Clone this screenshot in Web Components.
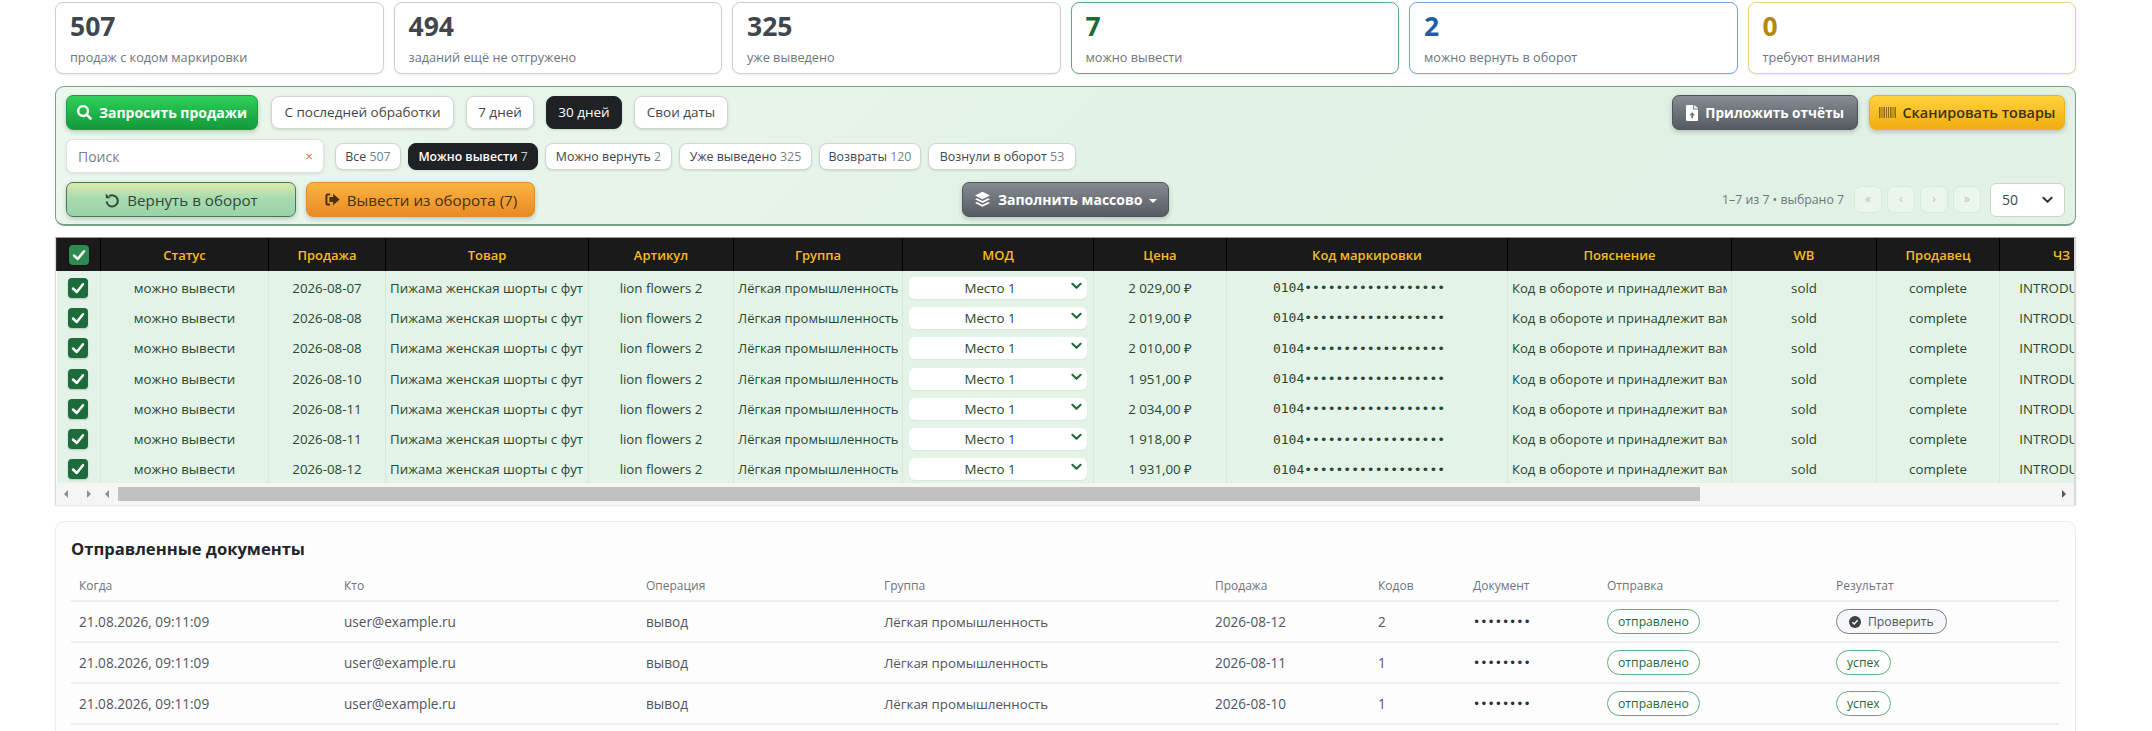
<!DOCTYPE html>
<html lang="ru">
<head>
<meta charset="utf-8">
<title>Вывод из оборота</title>
<style>
  html, body { margin: 0; height: 731px; overflow: hidden; background: #fff; }
  body { font: 13px "Open Sans", "Noto Sans", sans-serif; color: #2b3036; }
  #page { display: flex; flex-direction: column; width: 2021px; margin-left: 55px; padding-top: 2px; }
  #kpis { display: grid; grid-template-columns: repeat(6, 1fr); gap: 10px; margin-bottom: 12px; }
  action-toolbar { margin-bottom: 11px; }
  sales-table { margin-bottom: 16px; }
</style>
</head>
<body>
<div id="page">
  <div id="kpis">
    <kpi-card value="507" label="продаж с кодом маркировки"></kpi-card>
    <kpi-card value="494" label="заданий ещё не отгружено"></kpi-card>
    <kpi-card value="325" label="уже выведено"></kpi-card>
    <kpi-card value="7" label="можно вывести" tone="green"></kpi-card>
    <kpi-card value="2" label="можно вернуть в оборот" tone="blue"></kpi-card>
    <kpi-card value="0" label="требуют внимания" tone="amber"></kpi-card>
  </div>
  <action-toolbar></action-toolbar>
  <sales-table></sales-table>
  <docs-panel></docs-panel>
</div>

<script>
// Small inline icons, kept in one place so the buttons stay readable
const ICONS = {
  search: `<svg viewBox="0 0 512 512" fill="currentColor"><path d="M505 442.7L405.3 343c-4.5-4.5-10.6-7-17-7H372c27.6-35.3 44-79.7 44-128C416 93.1 322.9 0 208 0S0 93.1 0 208s93.1 208 208 208c48.3 0 92.7-16.4 128-44v16.3c0 6.4 2.5 12.5 7 17l99.7 99.7c9.4 9.4 24.6 9.4 33.9 0l28.3-28.3c9.4-9.4 9.4-24.6.1-34zM208 336c-70.7 0-128-57.2-128-128 0-70.7 57.2-128 128-128 70.7 0 128 57.2 128 128 0 70.7-57.2 128-128 128z"/></svg>`,
  undo: `<svg viewBox="0 0 16 16" fill="none" stroke="currentColor" stroke-width="2"><path d="M5.2 4.2A5.6 5.6 0 1 1 2.6 9.5"/><path d="M1.8 1.6v4.6h4.6z" fill="currentColor" stroke="none"/></svg>`,
  exit: `<svg viewBox="0 0 16 13" fill="currentColor"><path d="M6 1.500H3.600A1.200 1.200 0 0 0 2.400 2.700v7.600a1.200 1.200 0 0 0 1.200 1.200H6" fill="none" stroke="currentColor" stroke-width="2"/><path d="M9.200 .7 15.600 6.500l-6.400 5.800V9H5.400V4h3.800z"/></svg>`,
  layers: `<svg viewBox="0 0 16 16" fill="currentColor"><path d="M8 .8 15 4.300 8 7.800 1 4.300z"/><path d="M2.700 6.900 8 9.500l5.300-2.600L15 7.800 8 11.300 1 7.800z"/><path d="M2.700 10.400 8 13l5.300-2.600 1.700.9-7 3.500-7-3.500z"/></svg>`,
  file: `<svg viewBox="0 0 14 18" fill="currentColor"><path fill-rule="evenodd" d="M1.500 0H8v5h6v11.500a1.500 1.500 0 0 1-1.500 1.500h-11A1.500 1.500 0 0 1 0 16.500v-15A1.500 1.500 0 0 1 1.500 0zM7 8.200 3.900 11.600H6V15h2v-3.400h2.100z"/><path d="M9.200 0 14 3.800H9.200z"/></svg>`,
  barcode: `<svg viewBox="0 0 17 11" fill="#8a6a12"><path d="M0 0h1.500v11H0zM2.500 0h1v11h-1zM4.500 0h1.500v11H4.500zM7 0h1v11H7zM9 0h1v11H9zM11 0h1.500v11H11zM13.500 0h1v11h-1zM15.500 0H17v11h-1.500z"/></svg>`,
  tick: `<svg viewBox="0 0 16 16" fill="none" stroke="currentColor" stroke-width="2" stroke-linecap="round" stroke-linejoin="round"><path d="M4 8.400 7 11.200 12 5"/></svg>`,
  chevron: `<svg viewBox="0 0 12 8" fill="none" stroke="currentColor" stroke-width="2.200" stroke-linecap="round" stroke-linejoin="round"><path d="M1.500 1.500 6 6l4.500-4.500"/></svg>`,
  verified: `<svg viewBox="0 0 16 16"><circle cx="8" cy="8" r="8" fill="currentColor"/><path d="M4.500 8.300 7 10.700 11.500 5.700" fill="none" stroke="#fff" stroke-width="2"/></svg>`,
};

// Base class: attach an open shadow root and write the markup once
class ShadowElement extends HTMLElement {
  constructor() {
    super();
    this.attachShadow({ mode: "open" });
  }

  connectedCallback() {
    this.shadowRoot.innerHTML = this.render();
  }
}

class KpiCard extends ShadowElement {
  render() {
    const tone = {
      green: ["#5fae78", "#1c6b34"],
      blue: ["#76a5dc", "#1f5ca8"],
      amber: ["#f2d27a", "#b8860b"],
    }[this.getAttribute("tone")] || ["#ccced3", "#41464d"];
    return `
      <style>
        :host { display: block; box-sizing: border-box; height: 72px; padding: 5px 14px 0; background: #fff;
          border: 1px solid ${tone[0]}; border-radius: 8px; box-shadow: 0 1px 2px rgba(0,0,0,.08); }
        b { display: block; font-size: 26.500px; line-height: 36px; font-weight: 700; color: ${tone[1]}; }
        span { display: block; margin-top: 5px; font-size: 12.700px; line-height: 17px; color: #6c757d; }
      </style>
      <b>${this.getAttribute("value")}</b><span>${this.getAttribute("label")}</span>`;
  }
}

// Raised gradient button used across the toolbar
class ToolButton extends ShadowElement {
  render() {
    const v = {
      green: "color:#fff;font-weight:700;background:linear-gradient(#2fd058,#129a3a);border-color:#18a03f",
      dark: "color:#fff;font-weight:700;background:linear-gradient(#868c92,#565b62);border-color:#50555b",
      yellow: "color:#3c3312;background:linear-gradient(#ffd23c,#f0ac10);border-color:#e7b21f;font-weight:600",
      mint: "color:#34463a;background:linear-gradient(#dfe8a8,#a8dcb0 45%,#9bd2a8);border-color:#3f7d56",
      orange: "color:#46300f;background:linear-gradient(#fbb440,#e98a26);border-color:#e08f2c",
    }[this.getAttribute("variant")];
    const icon = this.getAttribute("icon");
    const fs = this.getAttribute("fs") || 14;
    const ih = this.getAttribute("ih") || 15;
    return `
      <style>
        :host { display: block; width: ${this.getAttribute("w")}px; height: 35px; }
        button { all: unset; box-sizing: border-box; display: flex; align-items: center; justify-content: center; gap: 7px;
          width: 100%; height: 100%; border: 1px solid; border-radius: 7px; font: inherit; font-size: ${fs}px; ${v};
          box-shadow: 0 2px 5px rgba(0,0,0,.2); white-space: nowrap; }
        svg { display: block; height: ${ih}px; width: auto; }
      </style>
      <button>${ICONS[icon] || ""}<span><slot></slot></span></button>`;
  }
}

// Period switch pill
class SegPill extends ShadowElement {
  render() {
    const on = this.hasAttribute("active");
    return `
      <style>
        :host { display: block; box-sizing: border-box; width: ${this.getAttribute("w")}px; height: 33px; line-height: 31px; text-align: center;
          font-size: 13.500px; border: 1px solid ${on ? "#1f2225" : "#cfd6d1"}; border-radius: 8px; white-space: nowrap;
          background: ${on ? "#1f2225" : "#fff"}; color: ${on ? "#fff" : "#3f454b"}; box-shadow: 0 1px 3px rgba(0,0,0,.12); }
      </style>
      <slot></slot>`;
  }
}

class FilterChip extends ShadowElement {
  render() {
    const on = this.hasAttribute("active");
    return `
      <style>
        :host { display: block; box-sizing: border-box; width: ${this.getAttribute("w")}px; height: 27px; line-height: 25px; text-align: center;
          font-size: ${on ? 12.200 : 12.400}px; border: 1px solid ${on ? "#1f2225" : "#cfd6d1"}; border-radius: 8px; white-space: nowrap;
          background: ${on ? "#1f2225" : "#fff"}; color: ${on ? "#fff" : "#3f454b"}; font-weight: ${on ? 600 : 400};
          box-shadow: 0 1px 2px rgba(0,0,0,.1); }
        i { font-style: normal; font-weight: 400; color: ${on ? "#c8ccd0" : "#7a8087"}; }
      </style>
      <slot></slot> <i>${this.getAttribute("count")}</i>`;
  }
}

class SearchBox extends ShadowElement {
  render() {
    return `
      <style>
        :host { display: block; position: relative; width: 258px; height: 34px; }
        input { box-sizing: border-box; width: 100%; height: 100%; padding: 0 26px 0 11px; font: inherit; font-size: 14px;
          border: 1px solid #dfe3e0; border-radius: 7px; background: #fff; outline: none; box-shadow: 0 1px 3px rgba(0,0,0,.1); }
        input::placeholder { color: #7b8087; opacity: 1; }
        span { position: absolute; right: 11px; top: 8px; font-size: 13px; line-height: 18px; color: #e2606a; }
      </style>
      <input placeholder="Поиск"><span>×</span>`;
  }
}

class PagerButton extends ShadowElement {
  render() {
    return `
      <style>
        :host { display: block; box-sizing: border-box; width: 28px; height: 27px; line-height: 24px; text-align: center;
          font-size: 12px; color: #b4c4b8; background: rgba(255,255,255,.3); border: 1px solid #d9e9dc; border-radius: 7px; }
      </style>
      <slot></slot>`;
  }
}

class PageSize extends ShadowElement {
  render() {
    return `
      <style>
        :host { display: block; position: relative; box-sizing: border-box; width: 75px; height: 34px; padding-left: 11px; line-height: 32px;
          font-size: 14px; color: #3f454b; background: #fff; border: 1px solid #ccd2ce; border-radius: 6px; }
        svg { position: absolute; right: 11px; top: 12px; width: 11px; height: 8px; color: #33383d; }
      </style>
      <slot></slot>${ICONS.chevron}`;
  }
}

// Three-row green panel with request, filter and bulk actions
class ActionToolbar extends ShadowElement {
  render() {
    return `
      <style>
        :host { display: grid; gap: 9px; align-content: start; box-sizing: border-box; height: 140px; padding: 8px 10px 0; border-radius: 9px;
          border: 1px solid #78a287; border-bottom-width: 2px; background: linear-gradient(135deg, #ecf7ee, #e0f1e4 70%, #e2f2e6); }
        .row { display: flex; align-items: center; }
        .g12 { gap: 12px; } .g7 { gap: 7px; } .g11 { gap: 11px; } .g10 { gap: 10px; }
        .push { margin-left: auto; }
        .tri { display: grid; grid-template-columns: 1fr auto 1fr; align-items: center; }
        .info { font-size: 12.300px; color: #6c757d; margin-right: 5px; white-space: nowrap; }
        .pages { display: flex; align-items: center; justify-content: flex-end; gap: 5px; }
        search-box { margin-right: 4px; }
        .mr1 { margin-right: 1px; }
      </style>
      <div class="row g12">
        <tool-button variant="green" icon="search" w="192" class="mr1">Запросить продажи</tool-button>
        <seg-pill w="183">С последней обработки</seg-pill>
        <seg-pill w="68">7 дней</seg-pill>
        <seg-pill w="76" active>30 дней</seg-pill>
        <seg-pill w="94">Свои даты</seg-pill>
        <div class="row g11 push">
          <tool-button variant="dark" icon="file" ih="16" fs="13.600" w="186">Приложить отчёты</tool-button>
          <tool-button variant="yellow" icon="barcode" ih="11" fs="14.400" w="196">Сканировать товары</tool-button>
        </div>
      </div>
      <div class="row g7">
        <search-box></search-box>
        <filter-chip w="66" count="507">Все</filter-chip>
        <filter-chip w="130" count="7" active>Можно вывести</filter-chip>
        <filter-chip w="127" count="2">Можно вернуть</filter-chip>
        <filter-chip w="133" count="325">Уже выведено</filter-chip>
        <filter-chip w="102" count="120">Возвраты</filter-chip>
        <filter-chip w="148" count="53">Вознули в оборот</filter-chip>
      </div>
      <div class="tri">
        <div class="row g10">
          <tool-button variant="mint" icon="undo" fs="15.200" ih="16" w="230">Вернуть в оборот</tool-button>
          <tool-button variant="orange" icon="exit" fs="15.200" ih="13" w="229">Вывести из оборота (7)</tool-button>
        </div>
        <tool-button variant="dark" icon="layers" ih="17" w="207">Заполнить массово <caret-down></caret-down></tool-button>
        <div class="pages">
          <span class="info">1–7 из 7 • выбрано 7</span>
          <pager-button>«</pager-button><pager-button>‹</pager-button><pager-button>›</pager-button><pager-button>»</pager-button>
          <page-size style="margin-left:4px">50</page-size>
        </div>
      </div>`;
  }
}

class CaretDown extends ShadowElement {
  render() {
    return `
      <style>
        :host { display: inline-block; margin-left: 3px; width: 0; height: 0; vertical-align: 2px;
          border: 4.500px solid transparent; border-top-color: currentColor; border-bottom: 0; }
      </style>`;
  }
}

class RowCheck extends ShadowElement {
  render() {
    const head = this.hasAttribute("head");
    return `
      <style>
        :host { display: block; width: 20px; height: 20px; margin: auto; border-radius: 4px; color: #fff;
          background: ${head ? "#2f8a50" : "#1c6b3a"}; box-shadow: 0 1px 2px rgba(0,0,0,.2); }
        svg { display: block; }
      </style>
      ${ICONS.tick}`;
  }
}

class ModSelect extends ShadowElement {
  render() {
    return `
      <style>
        :host { display: block; position: relative; box-sizing: border-box; height: 22px; line-height: 22px; padding-right: 16px;
          text-align: center; background: #fff; border-radius: 6px; box-shadow: 0 1px 2px rgba(0,0,0,.06); }
        svg { position: absolute; right: 5px; top: 5px; width: 11px; height: 8px; color: #1c6b3a; }
      </style>
      <slot></slot>${ICONS.chevron}`;
  }
}

// Fake horizontal bar: the frozen part has its own arrows before the real track
class ScrollTrack extends ShadowElement {
  render() {
    return `
      <style>
        :host { display: flex; align-items: center; height: 22px; padding: 0 8px; box-sizing: border-box; background: #f4f5f4; color: #8b8e8c; }
        .a { width: 0; height: 0; border: 4px solid transparent; }
        .l { border-left: 0; border-right: 4.500px solid currentColor; }
        .r { border-right: 0; border-left: 4.500px solid currentColor; }
        .thumb { width: 1582px; height: 14px; margin-left: 9px; background: #c1c1c1; }
        .end { margin-left: auto; color: #555; }
      </style>
      <i class="a l" style="margin-right:19px"></i><i class="a r" style="margin-right:14px"></i><i class="a l"></i>
      <div class="thumb"></div><i class="a r end"></i>`;
  }
}

class SalesTable extends ShadowElement {
  render() {
    const rows = [
      ["2026-08-07", "2 029,00 ₽"], ["2026-08-08", "2 019,00 ₽"], ["2026-08-08", "2 010,00 ₽"], ["2026-08-10", "1 951,00 ₽"],
      ["2026-08-11", "2 034,00 ₽"], ["2026-08-11", "1 918,00 ₽"], ["2026-08-12", "1 931,00 ₽"],
    ];
    const widths = [44, 168, 117, 203, 145, 169, 191, 133, 281, 224, 145, 123, 124];
    const heads = ["Статус", "Продажа", "Товар", "Артикул", "Группа", "МОД", "Цена", "Код маркировки", "Пояснение", "WB", "Продавец", "ЧЗ"];
    const body = rows.map(([date, price]) => `
      <tr>
        <td><row-check></row-check></td>
        <td>можно вывести</td>
        <td>${date}</td>
        <td class="l">Пижама женская шорты с фут</td>
        <td>lion flowers 2</td>
        <td class="l g">Лёгкая промышленность</td>
        <td class="s"><mod-select>Место 1</mod-select></td>
        <td>${price}</td>
        <td class="m">0104••••••••••••••••••</td>
        <td class="l n"><div>Код в обороте и принадлежит вам</div></td>
        <td>sold</td>
        <td>complete</td>
        <td>INTRODUCED</td>
      </tr>`).join("");
    return `
      <style>
        :host { display: block; overflow: hidden; border-top: 1px solid #999; border-right: 2px solid #d9dbd9;
          border-left: 1px solid #d9dbd9; box-sizing: border-box; box-shadow: 0 1px 2px rgba(0,0,0,.12); }
        table { border-collapse: collapse; table-layout: fixed; width: ${widths.reduce((a, b) => a + b)}px; }
        th { height: 33px; padding: 0 4px; background: #1a1a1a; color: #f7bb1e; font-weight: 600; font-size: 13px; border-right: 1px solid #000; border-left: 1px solid #333; }
        td { height: 30.300px; padding: 3px 4px 0; box-sizing: border-box; background: #e4f3e8; color: #26482f; text-align: center; font-size: 13.300px;
          white-space: nowrap; border-right: 1px solid #d5e8da; }
        td.l { text-align: left; }
        td.n { font-size: 13.100px; }
        td.n div { overflow: hidden; }
        td.g { font-size: 13px; }
        td.s { padding: 3px 6px 0; }
        td.m { font: 13px "DejaVu Sans Mono", monospace; padding-right: 20px; }
      </style>
      <table>
        <colgroup>${widths.map((w) => `<col style="width:${w}px">`).join("")}</colgroup>
        <thead><tr><th><row-check head></row-check></th>${heads.map((h) => `<th>${h}</th>`).join("")}</tr></thead>
        <tbody>${body}</tbody>
      </table>
      <scroll-track></scroll-track>`;
  }
}

class StatusPill extends ShadowElement {
  render() {
    const check = this.hasAttribute("check");
    return `
      <style>
        :host { display: inline-flex; align-items: center; gap: 7px; box-sizing: border-box; height: 25px; padding: 0 ${check ? 12 : 10}px;
          font-size: 12.200px; border-radius: 13px; white-space: nowrap; vertical-align: middle;
          border: 1px solid ${check ? "#7b7f85" : "#5fae78"}; color: ${check ? "#50555b" : "#1f6a39"}; background: ${check ? "#f6f7f8" : "#fff"}; }
        svg { width: 12px; height: 12px; color: #3b4148; }
      </style>
      ${check ? ICONS.verified : ""}<slot></slot>`;
  }
}

class DocsPanel extends ShadowElement {
  render() {
    const docs = [["2026-08-12", 2], ["2026-08-11", 1], ["2026-08-10", 1], ["2026-08-08", 1]];
    const widths = [265, 302, 238, 331, 163, 95, 134, 229, 231];
    const heads = ["Когда", "Кто", "Операция", "Группа", "Продажа", "Кодов", "Документ", "Отправка", "Результат"];
    const body = docs.map(([date, n], i) => `
      <tr>
        <td>21.08.2026, 09:11:09</td><td>user@example.ru</td><td>вывод</td><td class="g">Лёгкая промышленность</td>
        <td>${date}</td><td>${n}</td><td class="m">••••••••</td>
        <td><status-pill>отправлено</status-pill></td>
        <td>${i === 0 ? "<status-pill check>Проверить</status-pill>" : "<status-pill>успех</status-pill>"}</td>
      </tr>`).join("");
    return `
      <style>
        :host { display: block; box-sizing: border-box; height: 260px; padding: 17px 15px 0; background: #fdfdfd;
          border: 1px solid #eceeec; border-radius: 9px 9px 0 0; }
        h2 { margin: 0 0 10px; font-size: 16.600px; line-height: 20px; font-weight: 700; color: #212529; }
        table { border-collapse: collapse; table-layout: fixed; width: 1988px; }
        th { height: 32px; padding: 2px 8px 0; box-sizing: border-box; text-align: left; font-weight: 400; font-size: 12px; color: #6c757d; border-bottom: 2px solid #eceeec; }
        td { height: 41px; padding: 0 8px; box-sizing: border-box; font-size: 13.600px; color: #50565c; border-bottom: 2px solid #eceeec; white-space: nowrap; }
        td.g { font-size: 13.300px; }
        td.m { font: 12px "DejaVu Sans Mono", monospace; color: #2b3036; }
      </style>
      <h2>Отправленные документы</h2>
      <table>
        <colgroup>${widths.map((w) => `<col style="width:${w}px">`).join("")}</colgroup>
        <thead><tr>${heads.map((h) => `<th>${h}</th>`).join("")}</tr></thead>
        <tbody>${body}</tbody>
      </table>`;
  }
}

// Children first, so nested elements inside shadow roots upgrade as they are written
customElements.define("caret-down", CaretDown);
customElements.define("row-check", RowCheck);
customElements.define("mod-select", ModSelect);
customElements.define("scroll-track", ScrollTrack);
customElements.define("status-pill", StatusPill);
customElements.define("tool-button", ToolButton);
customElements.define("seg-pill", SegPill);
customElements.define("filter-chip", FilterChip);
customElements.define("search-box", SearchBox);
customElements.define("pager-button", PagerButton);
customElements.define("page-size", PageSize);
customElements.define("kpi-card", KpiCard);
customElements.define("action-toolbar", ActionToolbar);
customElements.define("sales-table", SalesTable);
customElements.define("docs-panel", DocsPanel);
</script>
</body>
</html>
